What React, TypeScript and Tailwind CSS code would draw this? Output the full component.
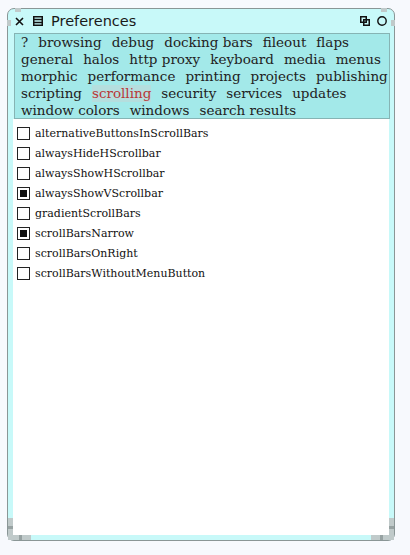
import React from "react";

const lines: string[][] = [
  ["?", "browsing", "debug", "docking bars", "fileout", "flaps"],
  ["general", "halos", "http proxy", "keyboard", "media", "menus"],
  ["morphic", "performance", "printing", "projects", "publishing"],
  ["scripting", "scrolling", "security", "services", "updates"],
  ["window colors", "windows", "search results"],
];

const items: { name: string; on: boolean }[] = [
  { name: "alternativeButtonsInScrollBars", on: false },
  { name: "alwaysHideHScrollbar", on: false },
  { name: "alwaysShowHScrollbar", on: false },
  { name: "alwaysShowVScrollbar", on: true },
  { name: "gradientScrollBars", on: false },
  { name: "scrollBarsNarrow", on: true },
  { name: "scrollBarsOnRight", on: false },
  { name: "scrollBarsWithoutMenuButton", on: false },
];

function Grips() {
  // decorative corner grips drawn over the window frame
  const g = "#c0caca";
  const d = "#97a2a2";
  return (
    <svg
      className="absolute -inset-px pointer-events-none"
      width="388"
      height="533"
      viewBox="0 0 388 533"
    >
      {/* top-left */}
      <rect x="8" y="0" width="6" height="4" fill={g} />
      <rect x="0" y="12" width="4" height="6" fill={g} />
      {/* top-right */}
      <rect x="374" y="0" width="6" height="4" fill={g} />
      <rect x="384" y="12" width="4" height="6" fill={g} />
      {/* bottom-left */}
      <rect x="1" y="510" width="5" height="22" fill={g} />
      <rect x="1" y="527" width="23" height="5" fill={g} />
      <rect x="12" y="527" width="3" height="5" fill={d} />
      <rect x="1" y="518" width="5" height="3" fill={d} />
      {/* bottom-right */}
      <rect x="382" y="510" width="5" height="22" fill={g} />
      <rect x="364" y="527" width="23" height="5" fill={g} />
      <rect x="373" y="527" width="3" height="5" fill={d} />
      <rect x="382" y="518" width="5" height="3" fill={d} />
    </svg>
  );
}

export default function App() {
  return (
    <div className="w-[410px] h-[555px] bg-[#f7f9fd] pt-[8px] pl-[7px]">
      <div className="relative w-[388px] h-[533px] rounded-[7px] border border-[#8a9696] bg-[#c8f9f9] flex flex-col">
        <Grips />

        {/* title bar */}
        <div className="h-[24px] flex items-center pl-[6px] pr-[6px] shrink-0">
          <svg width="9" height="9" viewBox="0 0 9 9" className="ml-[1px]">
            <path d="M1 1 L8 8 M8 1 L1 8" stroke="#111" strokeWidth="1.6" />
          </svg>
          <svg width="10" height="10" viewBox="0 0 10 10" className="ml-[9px]">
            <rect x="0.75" y="0.75" width="8.5" height="8.5" fill="none" stroke="#111" strokeWidth="1.5" />
            <path d="M1 3.5 H9 M1 6.5 H9" stroke="#111" strokeWidth="1.5" />
          </svg>
          <span
            className="ml-[8px] text-[14.5px] text-[#1a1a1a] leading-none"
            style={{ fontFamily: '"DejaVu Sans", sans-serif' }}
          >
            Preferences
          </span>
          <div className="flex-1" />
          <svg width="10" height="10" viewBox="0 0 10 10">
            <rect x="0.75" y="0.75" width="5.5" height="5.5" fill="none" stroke="#111" strokeWidth="1.5" />
            <rect x="3.75" y="3.75" width="5.5" height="5.5" fill="none" stroke="#111" strokeWidth="1.5" />
          </svg>
          <svg width="10" height="10" viewBox="0 0 10 10" className="ml-[7px] mr-[1px]">
            <circle cx="5" cy="5" r="4.2" fill="none" stroke="#111" strokeWidth="1.4" />
          </svg>
        </div>

        {/* body */}
        <div className="flex-1 flex flex-col mx-[5px] mb-[5px] min-h-0">
          <div
            className="ml-[1px] mr-[-1px] h-[86px] border border-[#86b4b4] bg-[#a3e9e9] pl-[6px] text-[13.5px] leading-[17px] text-[#222] shrink-0"
            style={{ fontFamily: '"DejaVu Serif", serif' }}
          >
            {lines.map((ws, i) => (
              <div key={i} className="flex gap-x-[10px] h-[17px] whitespace-nowrap">
                {ws.map((w) =>
                  w === "scrolling" ? (
                    <span key={w} className="text-[#b83838] bg-[#b5dede]">
                      {w}
                    </span>
                  ) : (
                    <span key={w}>{w}</span>
                  )
                )}
              </div>
            ))}
          </div>
          <div
            className="flex-1 bg-white pt-[4px] text-[11px] text-[#111]"
            style={{ fontFamily: '"DejaVu Serif", serif' }}
          >
            {items.map((it) => (
              <div key={it.name} className="h-[20px] flex items-center pl-[4px]">
                <div className="w-[13px] h-[13px] border border-[#222] bg-white flex items-center justify-center shrink-0">
                  {it.on && <div className="w-[7px] h-[7px] bg-[#111]" />}
                </div>
                <span className="ml-[5px] leading-none">{it.name}</span>
              </div>
            ))}
          </div>
        </div>
      </div>
    </div>
  );
}
